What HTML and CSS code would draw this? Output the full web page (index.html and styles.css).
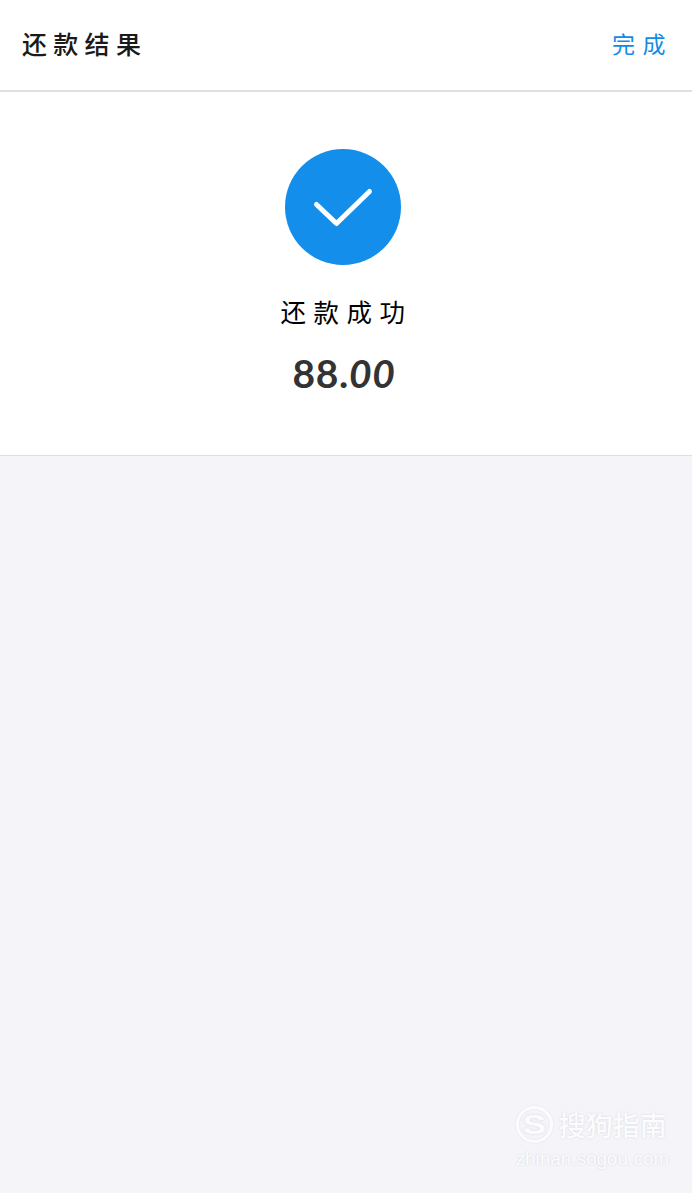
FILE: index.html
```html
<!DOCTYPE html>
<html lang="zh-CN">

<head>
    <meta charset="utf-8">
    <meta name="viewport" content="width=device-width, initial-scale=1.0">

    <title>还款结果</title>

    <link rel="stylesheet" href="styles.css">
</head>

<body>
    <header class="topbar">
        <h1 class="title">还款结果</h1>
        <a class="done">完成</a>
    </header>

    <main class="result">
        <svg class="check" viewBox="0 0 117 117">
            <circle cx="58" cy="58" r="58" />
            <path d="M31.5 55.5 L51.5 74.5 L84.5 42.5" />
        </svg>
        <p class="status">还款成功</p>
        <p class="amount">88.<i>00</i></p>
    </main>

    <footer class="watermark">
        <div class="brand">
            <span class="logo"><b>S</b></span>
            <span class="name">搜狗指南</span>
        </div>
        <p class="site">zhinan.sogou.com</p>
    </footer>
</body>

</html>
```

FILE: styles.css
```css
* {
    box-sizing: border-box;
    margin: 0;
    padding: 0;
}

body {
    display: flex;
    flex-direction: column;
    height: 100vh;
    background: #f4f4f9;
    font-family: "Noto Sans CJK SC", sans-serif;
}

.topbar {
    display: flex;
    align-items: center;
    justify-content: space-between;
    height: 92px;
    padding: 0 19px 4px 22px;
    background: #fff;
    border-bottom: 2px solid #e0e0e0;
}

.title {
    font-size: 25px;
    font-weight: 500;
    letter-spacing: 6.3px;
    color: #1a1a1a;
}

.done {
    font-size: 23px;
    letter-spacing: 7.5px;
    color: #128be6;
}

.result {
    display: flex;
    flex-direction: column;
    align-items: center;
    height: 364px;
    padding: 57px 6px 0 0;
    background: #fff;
    border-bottom: 1px solid #dedee2;
}

.check {
    width: 117px;
    height: 117px;
}

.check circle {
    fill: #138eeb;
}

.check path {
    fill: none;
    stroke: #fff;
    stroke-width: 5;
    stroke-linecap: round;
    stroke-linejoin: round;
}

.status {
    margin-top: 25px;
    padding-left: 7px;
    font-size: 25.5px;
    line-height: 40px;
    letter-spacing: 7.5px;
    color: #000;
}

.amount {
    margin-top: 18px;
    padding-left: 2px;
    font-family: Lato, sans-serif;
    font-size: 39px;
    font-weight: 700;
    line-height: 48px;
    letter-spacing: 0.7px;
    color: #333;
}

.watermark {
    margin-top: auto;
    padding: 0 23px 23px 0;
    align-self: flex-end;
    color: #fcfcfe;
    text-shadow: 0 0 2px #d2d2d8;
}

.brand {
    display: flex;
    align-items: center;
    gap: 6px;
}

.logo {
    display: flex;
    align-items: center;
    justify-content: center;
    width: 37px;
    height: 37px;
    border: 3px solid #fcfcfe;
    border-radius: 50%;
    box-shadow: 0 0 2px #dcdce2, inset 0 0 2px #dcdce2;
}

.logo b {
    font: 700 28px/1 "Liberation Sans", sans-serif;
    transform: scaleX(1.25);
}

.name {
    font-size: 27px;
    font-weight: 500;
    line-height: 37px;
}

.brand,
.site {
    padding-left: 3px;
}

.site {
    margin-top: 5px;
    font: 18.5px/22px "Liberation Sans", sans-serif;
    letter-spacing: 0.2px;
}
```
